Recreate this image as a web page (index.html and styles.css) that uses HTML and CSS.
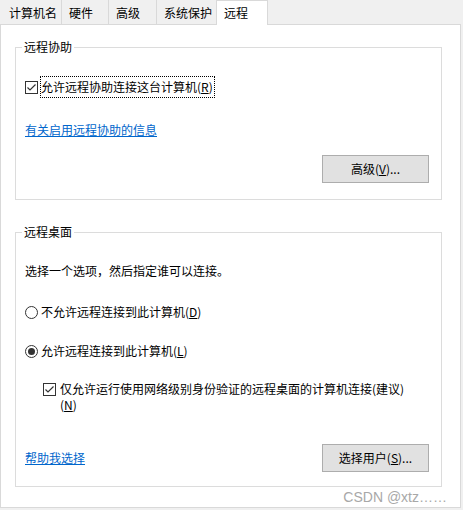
FILE: index.html
```html
<!DOCTYPE html>
<html lang="zh-CN">
<head>
<meta charset="utf-8">
<title>系统属性 - 远程</title>
<link rel="stylesheet" href="styles.css">
</head>
<body>
<div class="tabs">
  <div class="tab t1">计算机名</div>
  <div class="tab t2">硬件</div>
  <div class="tab t3">高级</div>
  <div class="tab t4">系统保护</div>
  <div class="tab t5 active">远程</div>
</div>
<div class="panel">
  <div class="group g1">
    <span class="legend">远程协助</span>
    <div class="row check-row">
      <svg class="box" width="13" height="13" viewBox="0 0 13 13"><rect x="0.5" y="0.5" width="12" height="12" fill="#fff" stroke="#333"/><polyline points="2.5,6.5 5,9 10.5,3.5" fill="none" stroke="#333" stroke-width="1.2"/></svg>
      <span class="focus">允许远程协助连接这台计算机(<u>R</u>)</span>
    </div>
    <div class="link l1">有关启用远程协助的信息</div>
    <div class="btn-row">
      <div class="btn">高级(<u>V</u>)...</div>
    </div>
  </div>
  <div class="group g2">
    <span class="legend">远程桌面</span>
    <div class="desc">选择一个选项，然后指定谁可以连接。</div>
    <div class="row radio-row r1">
      <span class="radio"></span>
      <span>不允许远程连接到此计算机(<u>D</u>)</span>
    </div>
    <div class="row radio-row r2">
      <span class="radio on"></span>
      <span>允许远程连接到此计算机(<u>L</u>)</span>
    </div>
    <div class="row nla">
      <svg class="box" width="13" height="13" viewBox="0 0 13 13"><rect x="0.5" y="0.5" width="12" height="12" fill="#fff" stroke="#333"/><polyline points="2.5,6.5 5,9 10.5,3.5" fill="none" stroke="#333" stroke-width="1.2"/></svg>
      <span class="nla-text">仅允许运行使用网络级别身份验证的远程桌面的计算机连接(建议)<br>(<u>N</u>)</span>
    </div>
    <div class="bottom-row">
      <span class="link">帮助我选择</span>
      <div class="btn">选择用户(<u>S</u>)...</div>
    </div>
  </div>
  <div class="watermark">CSDN @xtz……</div>
</div>
</body>
</html>
```
FILE: styles.css
```css
html, body {
  margin: 0;
  padding: 0;
}
body {
  background: #f0f0f0;
  font-family: "Noto Sans CJK SC", "Microsoft YaHei", sans-serif;
  font-size: 12px;
  line-height: 16px;
  color: #000;
  width: 463px;
  height: 510px;
  overflow: hidden;
}
.tabs {
  display: flex;
  height: 24px;
  position: relative;
  z-index: 1;
}
.tab {
  box-sizing: border-box;
  height: 24px;
  padding: 5px 0 0 8px;
  border-right: 1px solid #d9d9d9;
  background: #f0f0f0;
}
.t1 { width: 62px; padding-left: 9px; }
.t2 { width: 47px; padding-left: 7px; }
.t3 { width: 48px; padding-left: 7px; }
.t4 { width: 59px; padding-left: 7px; border-right: none; }
.t5 { width: 52px; }
.tab.active {
  background: #fff;
  border: 1px solid #d9d9d9;
  border-bottom: none;
  height: 25px;
  padding-top: 4px;
  padding-left: 7px;
}
.panel {
  position: relative;
  box-sizing: border-box;
  width: 461px;
  height: 484px;
  background: #fff;
  border: 1px solid #d9d9d9;
  padding: 22px 0 0 14px;
}
.group {
  position: relative;
  box-sizing: border-box;
  width: 427px;
  border: 1px solid #dcdcdc;
  padding: 0 12px 0 9px;
}
.g1 { height: 153px; }
.g2 { height: 255px; margin-top: 32px; }
.legend {
  position: absolute;
  top: -9px;
  left: 6px;
  padding: 0 2px;
  background: #fff;
  line-height: 16px;
}
.row {
  display: flex;
  align-items: center;
}
.box {
  display: block;
  flex: none;
}
.check-row {
  margin-top: 28px;
  height: 22px;
}
.check-row .box { margin-right: 3px; }
.focus {
  display: inline-block;
  height: 20px;
  line-height: 20px;
  padding: 0 1px 0 0;
  outline: 1px dotted #000;
  outline-offset: 0;
}
.link {
  color: #0066cc;
  text-decoration: underline;
}
.l1 { margin-top: 24px; }
.btn-row {
  display: flex;
  justify-content: flex-end;
  margin-top: 17px;
}
.btn {
  box-sizing: border-box;
  width: 107px;
  height: 28px;
  background: #e1e1e1;
  border: 1px solid #adadad;
  display: flex;
  align-items: center;
  justify-content: center;
}
.desc { margin-top: 30px; }
.radio-row { height: 16px; }
.r1 { margin-top: 25px; }
.r2 { margin-top: 23px; }
.radio {
  box-sizing: border-box;
  width: 13px;
  height: 13px;
  border: 1px solid #333;
  border-radius: 50%;
  margin-right: 3px;
  flex: none;
  display: flex;
  align-items: center;
  justify-content: center;
  background: #fff;
}
.radio.on::after {
  content: "";
  width: 7px;
  height: 7px;
  border-radius: 50%;
  background: #333;
}
.nla {
  margin-top: 22px;
  padding-left: 18px;
  align-items: flex-start;
}
.nla .box { margin-top: 2px; margin-right: 4px; }
.bottom-row {
  margin-top: 31px;
  display: flex;
  justify-content: space-between;
  align-items: center;
}
.watermark {
  position: absolute;
  top: 463px;
  right: 13px;
  font-family: "Liberation Sans", Arial, "Noto Sans CJK SC", sans-serif;
  font-size: 14px;
  line-height: 18px;
  color: #a8a8a8;
  white-space: nowrap;
}
u { text-decoration: underline; }
```
